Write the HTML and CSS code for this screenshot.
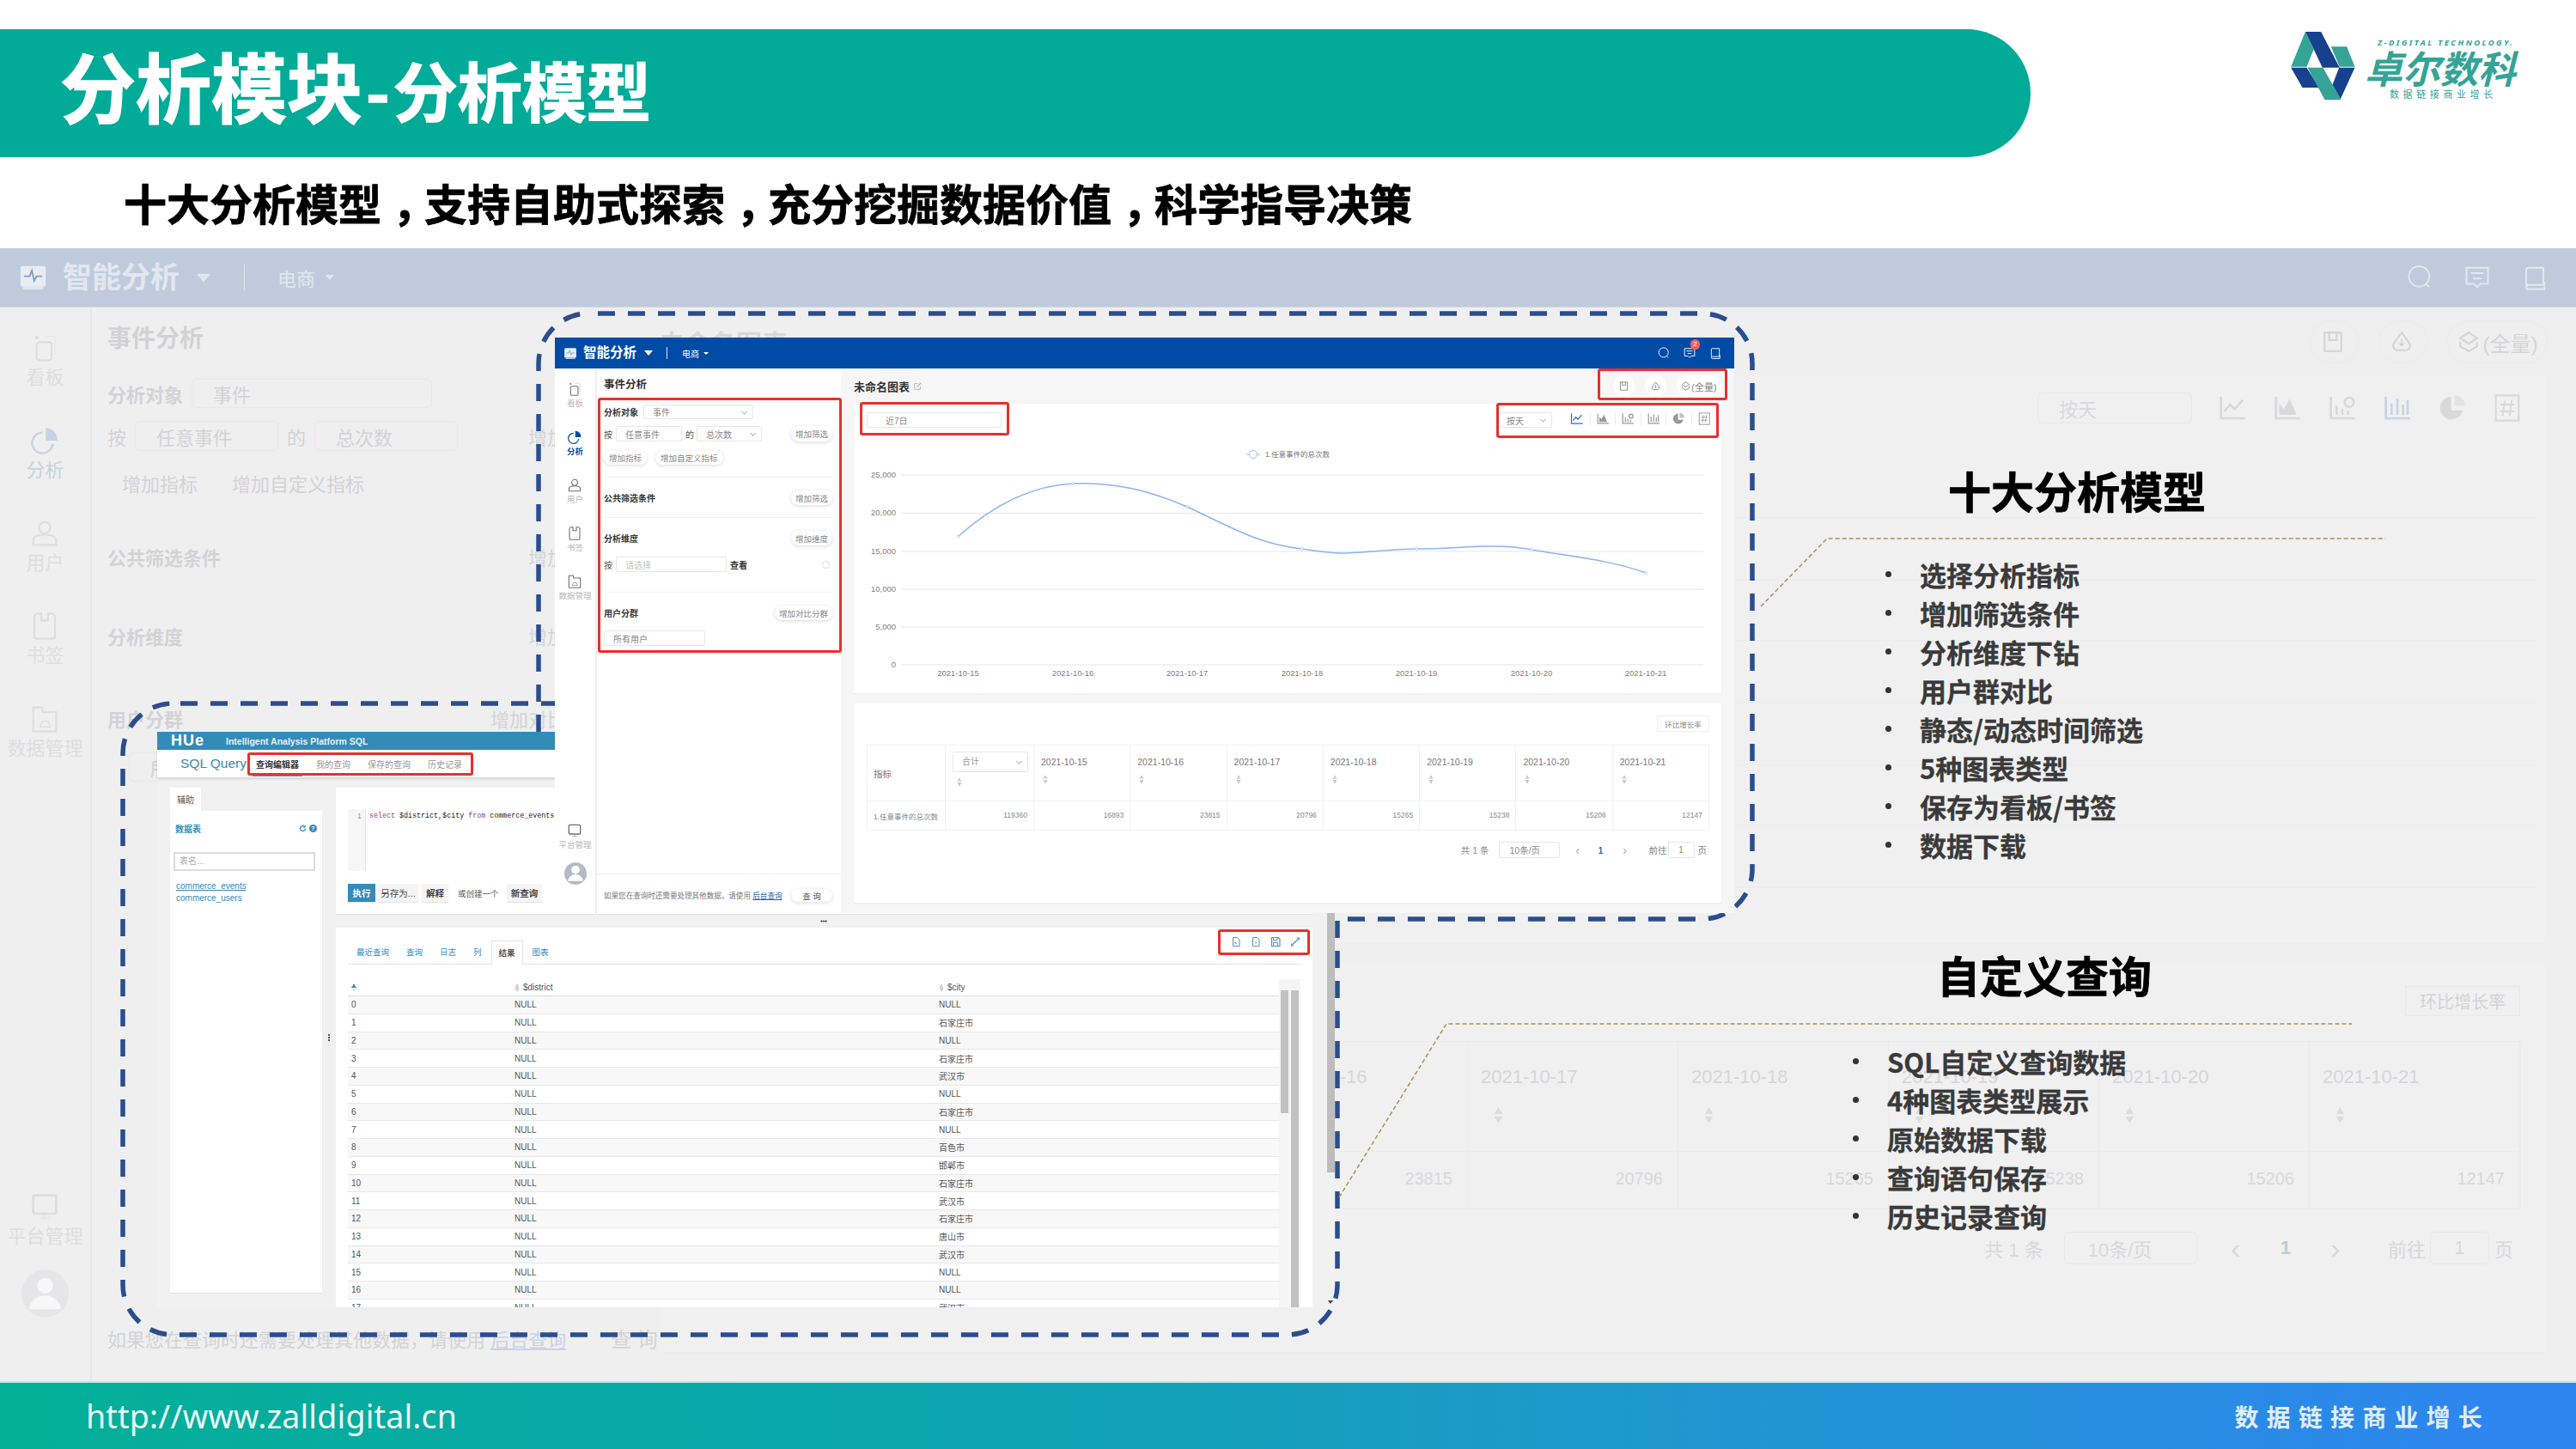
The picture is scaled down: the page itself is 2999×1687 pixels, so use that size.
FILE: index.html
```html
<!DOCTYPE html>
<html lang="zh-CN">
<head>
<meta charset="utf-8">
<title>分析模块-分析模型</title>
<link rel="stylesheet" href="styles.css">
</head>
<body>
<svg class="sprite" width="0" height="0" aria-hidden="true">
  <symbol id="i-search" viewBox="0 0 24 24"><circle cx="11.5" cy="11" r="9.5" fill="none" stroke="currentColor" stroke-width="1.6"/><path d="M18 18l3 3" stroke="currentColor" stroke-width="1.6"/></symbol>
  <symbol id="i-msg" viewBox="0 0 24 24"><path d="M2 3h20v15h-7l-3 3-3-3H2z" fill="none" stroke="currentColor" stroke-width="1.6"/><path d="M6 8h12M8 13h8" stroke="currentColor" stroke-width="1.6"/></symbol>
  <symbol id="i-book" viewBox="0 0 24 24"><path d="M4 19V5a2 2 0 0 1 2-2h14M20 3v16H6a2 2 0 0 0-2 2 2 2 0 0 0 2 2h15V16" fill="none" stroke="currentColor" stroke-width="1.6"/></symbol>
  <symbol id="i-logo" viewBox="0 0 24 24"><rect x="1" y="2" width="22" height="18" rx="2" fill="currentColor"/><rect x="3" y="20" width="18" height="2.5" rx="1" fill="currentColor" opacity=".75"/><path class="pulse" d="M4 11h5l2-5 2 9 2-4h5" fill="none" stroke-width="1.4"/></symbol>
  <symbol id="i-board" viewBox="0 0 24 24"><path d="M12 2h7a2 2 0 0 1 2 2v14" fill="none" stroke="currentColor" stroke-width="1" opacity=".4"/><rect x="5" y="7" width="13" height="16" rx="2.5" fill="none" stroke="currentColor" stroke-width="1.6"/><circle cx="5" cy="3" r="1.6" fill="currentColor"/></symbol>
  <symbol id="i-pie" viewBox="0 0 24 24"><path d="M10 5a9 9 0 1 0 9 10" fill="none" stroke="currentColor" stroke-width="1.8"/><path d="M13 1a10 10 0 0 1 10 11H13z" fill="currentColor"/></symbol>
  <symbol id="i-user" viewBox="0 0 24 24"><circle cx="12" cy="7" r="5" fill="none" stroke="currentColor" stroke-width="1.6"/><path d="M2 22v-4c0-3 4-5 10-5s10 2 10 5v4z" fill="none" stroke="currentColor" stroke-width="1.6"/></symbol>
  <symbol id="i-mark" viewBox="0 0 24 24"><path d="M6 1h3v6h6V1h3a3 3 0 0 1 3 3v17a2 2 0 0 1-2 2H5a2 2 0 0 1-2-2V4a3 3 0 0 1 3-3z" fill="none" stroke="currentColor" stroke-width="1.6"/></symbol>
  <symbol id="i-folder" viewBox="0 0 24 24"><path d="M2 2h8v4h12v17H2z" fill="none" stroke="currentColor" stroke-width="1.6"/><path d="M8 19l2-5h5l2 5z" fill="none" stroke="currentColor" stroke-width="1"/></symbol>
  <symbol id="i-monitor" viewBox="0 0 24 24"><rect x="2" y="2" width="20" height="16" rx="1.5" fill="none" stroke="currentColor" stroke-width="2"/><path d="M8 22h8M12 18v4" stroke="currentColor" stroke-width="1.5" opacity=".5"/></symbol>
  <symbol id="i-line" viewBox="0 0 24 24"><path d="M2 2v19h21" fill="none" stroke="currentColor" stroke-width="2"/><path d="M5 15l5-6 4 4 7-8" fill="none" stroke="currentColor" stroke-width="2"/></symbol>
  <symbol id="i-area" viewBox="0 0 24 24"><path d="M2 2v19h21" fill="none" stroke="currentColor" stroke-width="2"/><path d="M5 18V8l4 5 5-9 6 14z" fill="currentColor"/></symbol>
  <symbol id="i-barpin" viewBox="0 0 24 24"><path d="M2 2v19h21M7 18v-8M12 18v-5" fill="none" stroke="currentColor" stroke-width="2"/><circle cx="18" cy="7" r="4" fill="none" stroke="currentColor" stroke-width="2"/><path d="M17 18v-4" stroke="currentColor" stroke-width="2"/></symbol>
  <symbol id="i-bars" viewBox="0 0 24 24"><path d="M2 2v19h21M7 18V8M12 18V4M17 18v-9M21 18V5" fill="none" stroke="currentColor" stroke-width="2"/></symbol>
  <symbol id="i-donut" viewBox="0 0 24 24"><path d="M11 2a10 10 0 1 0 10 12H11z" fill="currentColor"/><path d="M14 1a9 9 0 0 1 9 9h-9z" fill="currentColor" opacity=".6"/></symbol>
  <symbol id="i-hash" viewBox="0 0 24 24"><rect x="2" y="1" width="20" height="22" fill="none" stroke="currentColor" stroke-width="1.6"/><path d="M10 5L8 19M16 5l-2 14M6 9h12M6 15h12" stroke="currentColor" stroke-width="1.4"/></symbol>
  <symbol id="i-save" viewBox="0 0 24 24"><rect x="3" y="2" width="18" height="20" fill="none" stroke="currentColor" stroke-width="2"/><path d="M8 2v8h8V2" fill="none" stroke="currentColor" stroke-width="2"/></symbol>
  <symbol id="i-cloud" viewBox="0 0 24 24"><path d="M12 2l8 11a5 5 0 0 1-3 8H7a5 5 0 0 1-3-8z" fill="none" stroke="currentColor" stroke-width="2"/><path d="M12 9v7M9.500 13.500l2.500 2.500 2.500-2.500" fill="none" stroke="currentColor" stroke-width="1.6"/></symbol>
  <symbol id="i-layers" viewBox="0 0 24 24"><path d="M12 2l9 6-9 6-9-6z" fill="none" stroke="currentColor" stroke-width="2"/><path d="M3 12v5l9 5 9-5v-5" fill="none" stroke="currentColor" stroke-width="2"/></symbol>
  <symbol id="i-doc" viewBox="0 0 24 24"><path d="M5 2h10l5 5v15H5z" fill="none" stroke="currentColor" stroke-width="2"/><path d="M9 12l5 5M14 12l-5 5" stroke="currentColor" stroke-width="1.600"/></symbol>
  <symbol id="i-doc2" viewBox="0 0 24 24"><path d="M5 2h10l5 5v15H5z" fill="none" stroke="currentColor" stroke-width="2"/><path d="M12 11v6" stroke="currentColor" stroke-width="1.600"/></symbol>
  <symbol id="i-disk" viewBox="0 0 24 24"><path d="M3 2h15l4 4v16H3z" fill="none" stroke="currentColor" stroke-width="2.400"/><path d="M7 2v6h9V2M7 22v-8h10v8" fill="none" stroke="currentColor" stroke-width="2"/></symbol>
  <symbol id="i-expand" viewBox="0 0 24 24"><path d="M6 18L18 6" stroke="currentColor" stroke-width="2.500"/><path d="M15 2h7v7zM2 15v7h7z" fill="currentColor"/></symbol>
  <symbol id="i-refresh" viewBox="0 0 24 24"><path d="M20 12a8 8 0 1 1-3-6.200" fill="none" stroke="currentColor" stroke-width="3.500"/><path d="M21 1v8h-8z" fill="currentColor"/></symbol>
</svg>

<div class="slide">
  <header class="titlebar">
    <h1 class="title">分析模块<span class="title-small"><span class="title-dash">-</span>分析模型</span></h1>
  </header>
  <p class="subtitle">十大分析模型<span class="comma">，</span>支持自助式探索<span class="comma">，</span>充分挖掘数据价值<span class="comma">，</span>科学指导决策</p>

  <section class="ghost">
    <div class="g-head">
      <svg class="g-logo"><use href="#i-logo"/></svg>
      <span class="g-brand">智能分析</span><i class="caret g-caret"></i>
      <span class="g-sep"></span>
      <span class="g-shop">电商</span><i class="caret g-caret g-caret-s"></i>
      <span class="g-head-icons">
        <svg class="g-hicon"><use href="#i-search"/></svg>
        <svg class="g-hicon"><use href="#i-msg"/></svg>
        <svg class="g-hicon"><use href="#i-book"/></svg>
      </span>
    </div>
    <div class="g-body">
      <nav class="g-side">
        <div class="g-nav"><svg><use href="#i-board"/></svg><span>看板</span></div>
        <div class="g-nav g-nav-on"><svg><use href="#i-pie"/></svg><span>分析</span></div>
        <div class="g-nav"><svg><use href="#i-user"/></svg><span>用户</span></div>
        <div class="g-nav"><svg><use href="#i-mark"/></svg><span>书签</span></div>
        <div class="g-nav"><svg><use href="#i-folder"/></svg><span>数据管理</span></div>
        <div class="g-nav g-nav-end"><svg><use href="#i-monitor"/></svg><span>平台管理</span></div>
        <div class="g-avatar"><svg viewBox="0 0 24 24"><circle cx="12" cy="8" r="4" fill="#f7f7f8"/><path d="M4 20c0-4 4-7 8-7s8 3 8 7z" fill="#f7f7f8"/></svg></div>
      </nav>
      <div class="g-panel">
        <h2 class="g-h2">事件分析</h2>
        <div class="g-row g-r1"><b class="g-l">分析对象</b><span class="g-sel g-sel-a">事件</span></div>
        <div class="g-row g-r2"><span class="g-l">按</span><span class="g-sel g-sel-b">任意事件</span><span class="g-l">的</span><span class="g-sel g-sel-b">总次数</span><span class="g-btn g-push">增加筛选</span></div>
        <div class="g-row g-r3"><span class="g-btn">增加指标</span><span class="g-btn">增加自定义指标</span></div>
        <div class="g-row g-r4"><b class="g-l">公共筛选条件</b><span class="g-btn g-push">增加筛选</span></div>
        <div class="g-row g-r5"><b class="g-l">分析维度</b><span class="g-btn g-push">增加维度</span></div>
        <div class="g-row g-r6"><b class="g-l">用户分群</b><span class="g-btn g-push">增加对比分群</span></div>
        <div class="g-row g-r7"><span class="g-sel g-sel-a">所有用户</span></div>
        <div class="g-foot"><span class="g-tip">如果您在查询时还需要处理其他数据，请使用 <u class="g-link">后台查询</u></span><span class="g-btn g-query">查 询</span></div>
      </div>
      <div class="g-main">
        <div class="g-mainhead">
          <span class="g-charttitle">未命名图表</span>
          <span class="g-tools">
            <span class="g-tool"><svg><use href="#i-save"/></svg></span>
            <span class="g-tool"><svg><use href="#i-cloud"/></svg></span>
            <span class="g-tool g-tool-w"><svg><use href="#i-layers"/></svg>(全量)</span>
          </span>
        </div>
        <div class="g-card g-chart">
          <div class="g-toolbar">
            <span class="g-sel g-sel-c">按天</span>
            <svg><use href="#i-line"/></svg><svg><use href="#i-area"/></svg><svg><use href="#i-barpin"/></svg><svg class="g-on"><use href="#i-bars"/></svg><svg><use href="#i-donut"/></svg><svg><use href="#i-hash"/></svg>
          </div>
          <div class="g-lines"><i></i><i></i><i></i><i></i><i></i><i></i><i></i></div>
        </div>
        <div class="g-card g-tablecard">
          <div class="g-growth"><span>环比增长率</span></div>
          <div class="g-table">
            <div class="g-th"></div><div class="g-th"></div>
            <div class="g-th">2021-10-15<i class="sort"></i></div><div class="g-th">2021-10-16<i class="sort"></i></div><div class="g-th">2021-10-17<i class="sort"></i></div><div class="g-th">2021-10-18<i class="sort"></i></div><div class="g-th">2021-10-19<i class="sort"></i></div><div class="g-th">2021-10-20<i class="sort"></i></div><div class="g-th">2021-10-21<i class="sort"></i></div>
            <div class="g-td"></div><div class="g-td"></div><div class="g-td">16893</div><div class="g-td">23815</div><div class="g-td">20796</div><div class="g-td">15265</div><div class="g-td">15238</div><div class="g-td">15206</div><div class="g-td">12147</div>
          </div>
          <div class="g-pager">
            <span class="g-pg-total">共 1 条</span><span class="g-sel g-sel-d">10条/页</span><span class="g-chev">&lsaquo;</span><b class="g-cur">1</b><span class="g-chev">&rsaquo;</span><span class="g-pg-go">前往</span><span class="g-sel g-sel-e">1</span><span class="g-pg-unit">页</span>
          </div>
        </div>
      </div>
    </div>
  </section>

  <footer class="footer">
    <span class="url">http://www.zalldigital.cn</span>
    <span class="motto">数据链接商业增长</span>
  </footer>

  <svg class="canvas" viewBox="0 0 2999 1687"><rect class="dash dash-a" x="627" y="365" width="1413" height="705" rx="58"/></svg>

  <section class="hue">
    <div class="hue-top"><span class="hue-logo">HUe</span><span class="hue-name">Intelligent Analysis Platform SQL</span></div>
    <div class="hue-nav">
      <span class="hue-sql">SQL Query</span>
      <span class="hue-tab hue-tab-on">查询编辑器</span><span class="hue-tab">我的查询</span><span class="hue-tab">保存的查询</span><span class="hue-tab">历史记录</span>
    </div>
    <div class="hue-body">
      <aside class="hue-left">
        <span class="hue-assist">辅助</span>
        <div class="hue-leftbox">
          <div class="hue-lhead"><span>数据表</span><span class="hue-licons"><svg><use href="#i-refresh"/></svg><i class="hue-q">?</i></span></div>
          <div class="hue-search">表名...</div>
          <u class="hue-item">commerce_events</u>
          <span class="hue-item">commerce_users</span>
        </div>
      </aside>
      <i class="hue-grip"></i>
      <div class="hue-right">
        <div class="hue-editor">
          <div class="hue-code"><span class="hue-gutter">1</span><code class="hue-sqltext"><span class="kw">select</span> $district,$city <span class="kw">from</span> commerce_events</code></div>
          <div class="hue-actions"><span class="hue-b hue-b-run">执行</span><span class="hue-b hue-b-w1">另存为...</span><span class="hue-b hue-b-w2">解释</span><span class="hue-or">或创建一个</span><span class="hue-b hue-b-w3">新查询</span></div>
        </div>
        <i class="hue-splitdots"></i>
        <div class="hue-results">
          <div class="hue-rtabs"><span>最近查询</span><span>查询</span><span>日志</span><span>列</span><span class="hue-rtab-on">结果</span><span>图表</span>
            <span class="hue-rtools"><svg><use href="#i-doc"/></svg><svg><use href="#i-doc2"/></svg><svg><use href="#i-disk"/></svg><svg><use href="#i-expand"/></svg></span>
          </div>
          <div class="hue-tablewrap">
            <div class="hue-table">
              <div class="hue-tr hue-thead"><span><i class="sort sort-on"></i></span><span><i class="sort"></i>$district</span><span><i class="sort"></i>$city</span></div>
              <div class="hue-tr"><span>0</span><span>NULL</span><span>NULL</span></div>
              <div class="hue-tr"><span>1</span><span>NULL</span><span>石家庄市</span></div>
              <div class="hue-tr"><span>2</span><span>NULL</span><span>NULL</span></div>
              <div class="hue-tr"><span>3</span><span>NULL</span><span>石家庄市</span></div>
              <div class="hue-tr"><span>4</span><span>NULL</span><span>武汉市</span></div>
              <div class="hue-tr"><span>5</span><span>NULL</span><span>NULL</span></div>
              <div class="hue-tr"><span>6</span><span>NULL</span><span>石家庄市</span></div>
              <div class="hue-tr"><span>7</span><span>NULL</span><span>NULL</span></div>
              <div class="hue-tr"><span>8</span><span>NULL</span><span>百色市</span></div>
              <div class="hue-tr"><span>9</span><span>NULL</span><span>邯郸市</span></div>
              <div class="hue-tr"><span>10</span><span>NULL</span><span>石家庄市</span></div>
              <div class="hue-tr"><span>11</span><span>NULL</span><span>武汉市</span></div>
              <div class="hue-tr"><span>12</span><span>NULL</span><span>石家庄市</span></div>
              <div class="hue-tr"><span>13</span><span>NULL</span><span>唐山市</span></div>
              <div class="hue-tr"><span>14</span><span>NULL</span><span>武汉市</span></div>
              <div class="hue-tr"><span>15</span><span>NULL</span><span>NULL</span></div>
              <div class="hue-tr"><span>16</span><span>NULL</span><span>NULL</span></div>
              <div class="hue-tr"><span>17</span><span>NULL</span><span>武汉市</span></div>
            </div>
            <div class="hue-scrolls"><div class="hue-track"><i class="hue-thumb hue-thumb-a"></i></div><div class="hue-track"><i class="hue-thumb hue-thumb-b"></i></div></div>
          </div>
        </div>
      </div>
      <div class="hue-vbar"><i class="hue-vthumb"></i><i class="hue-varrow"></i></div>
    </div>
  </section>

  <svg class="canvas" viewBox="0 0 2999 1687"><rect class="dash dash-b" x="143" y="819" width="1414" height="735" rx="58"/></svg>

  <section class="app">
    <div class="app-head">
      <svg class="app-logo"><use href="#i-logo"/></svg>
      <span class="app-brand">智能分析</span><i class="caret"></i>
      <span class="app-sep"></span>
      <span class="app-shop">电商</span><i class="caret caret-s"></i>
      <span class="app-hicons">
        <svg><use href="#i-search"/></svg>
        <span class="app-msg"><svg><use href="#i-msg"/></svg><b class="badge">2</b></span>
        <svg><use href="#i-book"/></svg>
      </span>
    </div>
    <div class="app-body">
      <nav class="side">
        <div class="nav"><svg><use href="#i-board"/></svg><span>看板</span></div>
        <div class="nav nav-on"><svg><use href="#i-pie"/></svg><span>分析</span></div>
        <div class="nav"><svg><use href="#i-user"/></svg><span>用户</span></div>
        <div class="nav"><svg><use href="#i-mark"/></svg><span>书签</span></div>
        <div class="nav"><svg><use href="#i-folder"/></svg><span>数据管理</span></div>
        <div class="nav nav-end"><svg><use href="#i-monitor"/></svg><span>平台管理</span></div>
        <div class="avatar"><svg viewBox="0 0 24 24"><circle cx="12" cy="8" r="4.500" fill="#fff"/><path d="M4 20c0-4 4-7 8-7s8 3 8 7z" fill="#fff"/></svg></div>
      </nav>
      <div class="panel">
        <h2 class="panel-title">事件分析</h2>
        <div class="row row-a"><b class="lbl lbl-w">分析对象</b><span class="sel sel-a">事件<i class="chev"></i></span></div>
        <div class="row row-b"><span class="lbl">按</span><span class="sel sel-b">任意事件</span><span class="lbl lbl-of">的</span><span class="sel sel-c">总次数<i class="chev"></i></span><span class="pill push">增加筛选</span></div>
        <div class="row row-c"><span class="pill">增加指标</span><span class="pill pill-g">增加自定义指标</span></div>
        <hr class="rule rule-a">
        <div class="row row-d"><b class="lbl">公共筛选条件</b><span class="pill push">增加筛选</span></div>
        <hr class="rule rule-a">
        <div class="row row-d"><b class="lbl">分析维度</b><span class="pill push">增加维度</span></div>
        <div class="row row-e"><span class="lbl">按</span><span class="sel sel-d ph">请选择</span><b class="lbl lbl-see">查看</b><i class="clear push"></i></div>
        <hr class="rule rule-b">
        <div class="row row-d"><b class="lbl">用户分群</b><span class="pill push">增加对比分群</span></div>
        <div class="row row-f"><span class="sel sel-e">所有用户</span></div>
        <div class="panel-foot"><span class="tip">如果您在查询时还需要处理其他数据，请使用 <u class="link">后台查询</u></span><span class="pill push">查 询</span></div>
      </div>
      <div class="main">
        <div class="main-head">
          <b class="chart-name">未命名图表</b><svg class="edit" viewBox="0 0 24 24"><path d="M20 13v9H2V4h10" fill="none" stroke="currentColor" stroke-width="2"/><path d="M9 15l3-1L23 3l-2-2L10 12z" fill="currentColor"/></svg>
          <span class="main-tools">
            <span class="tool"><svg><use href="#i-save"/></svg></span>
            <span class="tool"><svg><use href="#i-cloud"/></svg></span>
            <span class="tool tool-w"><svg><use href="#i-layers"/></svg>(全量)</span>
          </span>
        </div>
        <div class="card card-chart">
          <div class="toolbar">
            <span class="sel sel-f">近7日</span>
            <span class="sel sel-g">按天<i class="chev"></i></span>
            <span class="types">
              <svg class="type-on"><use href="#i-line"/></svg><svg><use href="#i-area"/></svg><svg><use href="#i-barpin"/></svg><svg><use href="#i-bars"/></svg><svg><use href="#i-donut"/></svg><svg><use href="#i-hash"/></svg>
            </span>
          </div>
          <svg class="chart" viewBox="994 498 1010 309">
            <g class="grid"><path d="M1049 553h934M1049 597.500h934M1049 642h934M1049 686h934M1049 730h934M1049 774h934"/></g>
            <g class="ylab"><text x="1043" y="556">25,000</text><text x="1043" y="600">20,000</text><text x="1043" y="645">15,000</text><text x="1043" y="689">10,000</text><text x="1043" y="733">5,000</text><text x="1043" y="777">0</text></g>
            <g class="xlab"><text x="1115.500" y="787">2021-10-15</text><text x="1249" y="787">2021-10-16</text><text x="1382" y="787">2021-10-17</text><text x="1516" y="787">2021-10-18</text><text x="1649" y="787">2021-10-19</text><text x="1783" y="787">2021-10-20</text><text x="1916" y="787">2021-10-21</text></g>
            <path class="curve" d="M1115.500 624.500C1160 585 1205 565 1249 563C1300 561 1340 572 1382 590C1430 612 1465 634 1516 639C1535 642 1550 644 1562 644C1590 644 1620 639 1649 639C1680 639 1710 636 1736 636C1755 636 1770 637 1783 640C1830 648 1875 652 1916 667"/>
            <g class="dots"><circle cx="1115.500" cy="624.500" r="1.500"/><circle cx="1249" cy="563" r="1.500"/><circle cx="1382" cy="590" r="1.500"/><circle cx="1516" cy="639" r="1.500"/><circle cx="1649" cy="639" r="1.500"/><circle cx="1783" cy="640" r="1.500"/><circle cx="1916" cy="667" r="1.500"/></g>
            <path class="legend-line" d="M1451 529h16"/><circle class="legend-dot" cx="1459" cy="529" r="4.500"/>
            <text class="legend" x="1473" y="532">1.任意事件的总次数</text>
          </svg>
        </div>
        <div class="card card-table">
          <div class="growth-row"><span class="growth">环比增长率</span></div>
          <div class="dt">
            <div class="dt-h dt-h-m">指标</div>
            <div class="dt-h dt-h-t"><span class="sel sel-h">合计<i class="chev"></i></span><i class="sort"></i></div>
            <div class="dt-h">2021-10-15<i class="sort"></i></div><div class="dt-h">2021-10-16<i class="sort"></i></div><div class="dt-h">2021-10-17<i class="sort"></i></div><div class="dt-h">2021-10-18<i class="sort"></i></div><div class="dt-h">2021-10-19<i class="sort"></i></div><div class="dt-h">2021-10-20<i class="sort"></i></div><div class="dt-h">2021-10-21<i class="sort"></i></div>
            <div class="dt-d dt-d-l">1.任意事件的总次数</div><div class="dt-d">119360</div><div class="dt-d">16893</div><div class="dt-d">23815</div><div class="dt-d">20796</div><div class="dt-d">15265</div><div class="dt-d">15238</div><div class="dt-d">15206</div><div class="dt-d">12147</div>
          </div>
          <div class="pager">
            <span class="pg-total">共 1 条</span><span class="sel sel-i">10条/页</span><span class="pg-arrow pg-prev">&lsaquo;</span><b class="pg-cur">1</b><span class="pg-arrow pg-next">&rsaquo;</span><span class="pg-go">前往</span><span class="sel sel-j">1</span><span>页</span>
          </div>
        </div>
      </div>
    </div>
  </section>

  <svg class="canvas" viewBox="0 0 2999 1687">
    <path class="leader" d="M2050 706L2127 627H2777"/>
    <path class="leader" d="M1559 1394L1684 1192H2738"/>
  </svg>

  <i class="red r-panel"></i><i class="red r-date"></i><i class="red r-tools"></i><i class="red r-types"></i><i class="red r-hue"></i><i class="red r-rtools"></i>

  <aside class="note note-a">
    <h3 class="note-title">十大分析模型</h3>
    <ul class="note-list">
      <li>选择分析指标</li><li>增加筛选条件</li><li>分析维度下钻</li><li>用户群对比</li><li>静态/动态时间筛选</li><li>5种图表类型</li><li>保存为看板/书签</li><li>数据下载</li>
    </ul>
  </aside>
  <aside class="note note-b">
    <h3 class="note-title">自定义查询</h3>
    <ul class="note-list">
      <li>SQL自定义查询数据</li><li>4种图表类型展示</li><li>原始数据下载</li><li>查询语句保存</li><li>历史记录查询</li>
    </ul>
  </aside>

  <div class="brand">
    <svg class="brand-mark" viewBox="500 110 224 240">
      <path fill="#17408f" d="M550 110h55l65 125h-60z"/>
      <path fill="#35a396" d="M550 110L500 232h55l25-62zM640 162h55l28 70h-53z"/>
      <path fill="#17408f" d="M500 235h55l43 70h-58zM668 235h55l-50 110-28-50z"/>
      <path fill="#35a396" d="M558 235h54l63 113h-57z"/>
    </svg>
    <div class="brand-text">
      <span class="brand-en">Z-DIGITAL TECHNOLOGY.</span>
      <span class="brand-cn">卓尔数科</span>
      <span class="brand-sub">数据链接商业增长</span>
    </div>
  </div>
</div>
</body>
</html>
```

FILE: styles.css
```css
* { box-sizing: border-box; }
html, body { margin: 0; padding: 0; background: #fff; }
body { font-family: "Liberation Sans", "Noto Sans CJK SC", sans-serif; }
h1, h2, h3, p, ul { margin: 0; padding: 0; }
i { font-style: normal; }
.sprite { position: absolute; }

.slide { position: relative; width: 2999px; height: 1687px; overflow: hidden; background: #fff; display: flex; flex-direction: column; padding-top: 34px; }

/* heading */
.titlebar { flex: none; width: 2364px; height: 149px; background: #02ab98; border-radius: 0 75px 75px 0; padding-left: 70px; display: flex; align-items: center; }
.title { font: 700 88px/1 "Noto Sans CJK SC", sans-serif; color: #fff; margin-top: -22px; -webkit-text-stroke: 1.500px #fff; white-space: nowrap; }
.title-small { font-size: 75px; }
.title-dash { display: inline-block; margin: 0 4px 0 4px; }
.subtitle { flex: none; height: 106px; padding-left: 144px; font: 700 50px/104px "Noto Sans CJK SC", sans-serif; color: #000; white-space: nowrap; -webkit-text-stroke: .8px #000; }
.comma { display: inline-block; transform: translateX(.26em); }

/* ghost background app */
.ghost { flex: none; height: 1319px; background: #efeff0; display: flex; flex-direction: column; color: #d3d3d5; font-family: "Liberation Sans", "Noto Sans CJK SC", sans-serif; }
.g-head { flex: none; height: 69px; background: #bfcbdd; display: flex; align-items: center; padding-left: 21px; color: #e2e7ef; border-bottom: 1px solid #cfd6e2; }
.g-logo { width: 35px; height: 32px; color: #e9edf3; }
.g-head .pulse { stroke: #a9b8cf; }
.pulse { stroke: #7f9cc8; }
.g-brand { font-size: 34px; font-weight: 700; margin-left: 17px; line-height: 1; }
.caret { display: inline-block; width: 0; height: 0; border: 5px solid transparent; border-top: 6px solid #fff; border-bottom: 0; margin-left: 9px; }
.g-caret { border-width: 9px 8px 0; border-top-color: #e2e7ef; margin-left: 20px; }
.g-caret-s { border-width: 6px 5px 0; margin-left: 12px; }
.g-sep { width: 1px; height: 30px; background: #e2e7ef; margin-left: 39px; }
.g-shop { font-size: 22px; margin-left: 38px; }
.g-head-icons { margin-left: auto; display: flex; gap: 35px; padding-right: 32px; }
.g-hicon { width: 32px; height: 30px; }
.g-body { flex: 1; display: grid; grid-template-columns: 107px 640px 1fr; min-height: 0; }
.g-side { border-right: 2px solid #e9e9ea; display: flex; flex-direction: column; align-items: center; padding-top: 31px; }
.g-nav { height: 108px; display: flex; flex-direction: column; align-items: center; color: #dededf; }
.g-nav svg { width: 34px; height: 32px; }
.g-nav span { font-size: 22px; line-height: 1; margin-top: 8px; }
.g-nav-on { color: #c8d2e1; }
.g-nav-end { margin-top: auto; height: 77px; }
.g-avatar { width: 55px; height: 56px; border-radius: 50%; background: #e6e6e8; margin-bottom: 74px; margin-top: 12px; flex: none; }
.g-avatar svg { width: 55px; height: 56px; display: block; }
.g-panel { padding-left: 18px; display: flex; flex-direction: column; }
.g-h2 { font-size: 28px; font-weight: 700; line-height: 74px; height: 74px; color: #d2d2d4; }
.g-row { display: flex; align-items: center; gap: 10px; font-size: 22px; }
.g-l { font-weight: 400; flex: none; }
b.g-l { font-weight: 700; }
.g-r1 { margin-top: 9px; height: 34px; }
.g-r2 { margin-top: 15px; height: 35px; }
.g-r3 { margin-top: 20px; height: 33px; gap: 40px; padding-left: 17px; }
.g-r4 { margin-top: 55px; height: 30px; }
.g-r5 { margin-top: 62px; height: 30px; }
.g-r6 { margin-top: 66px; height: 30px; }
.g-r7 { margin-top: 25px; height: 34px; padding-left: 25px; }
.g-sel { border: 1px solid #e8e8ea; border-radius: 6px; display: flex; align-items: center; height: 100%; padding-left: 24px; }
.g-sel-a { width: 280px; }
.g-sel-b { width: 167px; }
.g-sel-c { width: 180px; height: 36px; }
.g-sel-d { width: 155px; height: 38px; margin-left: 24px; padding-left: 27px; }
.g-sel-e { width: 69px; height: 38px; margin-left: 5px; padding: 0; justify-content: center; }
.g-btn { flex: none; }
.g-push { margin-left: auto; margin-right: 44px; }
.g-foot { margin-top: auto; margin-bottom: 33px; display: flex; align-items: center; font-size: 22px; }
.g-tip { flex: none; }
.g-link { color: #c8d3e6; }
.g-query { margin-left: 52px; font-size: 24px; }
.g-main { padding: 0 34px 33px 20px; display: flex; flex-direction: column; min-width: 0; }
.g-mainhead { height: 80px; flex: none; display: flex; align-items: center; }
.g-charttitle { font-size: 30px; font-weight: 700; color: #d8d8da; }
.g-tools { margin-left: auto; display: flex; gap: 25px; font-size: 24px; }
.g-tool { width: 55px; height: 47px; border-radius: 26px; background: #efeff0; box-shadow: 0 0 4px rgba(0,0,0,.03); display: flex; align-items: center; justify-content: center; color: #d5d5d7; }
.g-tool svg { width: 26px; height: 28px; margin-right: 4px; }
.g-tool-w { width: 115px; }
.g-card { background: #f0f0f1; box-shadow: 0 1px 2px rgba(0,0,0,.015); }
.g-chart { flex: none; height: 660px; padding: 19px 29px 0 0; }
.g-toolbar { display: flex; justify-content: flex-end; align-items: center; gap: 30px; height: 36px; color: #d9d9db; }
.g-toolbar svg { width: 34px; height: 32px; }
.g-toolbar .g-on { color: #c9d3e3; }
.g-toolbar .g-sel-c { font-size: 22px; }
.g-lines { margin: 109px -17px 0 0; display: grid; grid-auto-rows: 71.67px; }
.g-lines i { border-top: 2px solid #ecedee; }
.g-tablecard { flex: none; height: 454px; margin-top: 22px; padding: 28px 31px 0 0; display: flex; flex-direction: column; }
.g-growth { display: flex; justify-content: flex-end; font-size: 20px; }
.g-growth span { width: 134px; height: 35px; border: 1px solid #e8e8ea; display: flex; align-items: center; justify-content: center; white-space: nowrap; }
.g-table { margin-top: 29px; margin-left: auto; display: grid; grid-template-columns: 226px 226px repeat(7, 245px); grid-template-rows: 128px 66px; border: 1px solid #ebebec; border-width: 1px 1px 1px 0; }
.g-th { border-right: 1px solid #ebebec; border-bottom: 1px solid #ebebec; padding: 26px 0 0 15px; font-size: 22px; line-height: 30px; color: #d6d6d8; }
.g-th .sort { display: block; margin: 20px 0 0 15px; color: #dcdce0; transform: scale(1.8); transform-origin: 0 0; }
.g-td { border-right: 1px solid #ebebec; text-align: right; padding: 20px 17px 0 0; font-size: 20px; color: #d8d8da; }
.g-pager { margin-top: 26px; display: flex; align-items: center; justify-content: flex-end; font-size: 22px; color: #d8d8da; margin-right: 8px; }
.g-pg-total { white-space: nowrap; }
.g-chev { font-size: 34px; line-height: 1; width: 14px; text-align: center; margin-left: 38px; }
.g-cur { color: #bcc9dd; margin-left: 45px; }
.g-cur + .g-chev { margin-left: 45px; }
.g-pg-go { margin-left: 54px; }
.g-pg-unit { margin-left: 6px; }

/* footer */
.footer { flex: none; height: 80px; border-top: 2px solid #bfe6e4; background: linear-gradient(90deg, #04b097 0%, #0ba6ad 35%, #1d99cb 62%, #2f84f2 100%); display: flex; align-items: center; justify-content: space-between; padding: 0 104px 0 100px; color: #fff; }
.url { font: 400 37.500px/1 "Noto Sans", sans-serif; letter-spacing: .2px; opacity: .92; }
.motto { font: 700 28px/1 "Noto Sans CJK SC", sans-serif; letter-spacing: 9.200px; opacity: .85; margin-right: -4px; }

/* overlays */
.canvas { position: absolute; left: 0; top: 0; width: 2999px; height: 1687px; pointer-events: none; }
.dash { fill: none; stroke: #2b4d8e; stroke-width: 5.500; stroke-dasharray: 20 15; }
.dash-a { stroke-dashoffset: -11; }
.dash-b { stroke-dashoffset: -9; }
.leader { fill: none; stroke: #a09658; stroke-width: 1.500; stroke-dasharray: 5 3; }
.red { position: absolute; border: 3px solid #e9302b; border-radius: 3px; }
.r-panel { left: 696px; top: 463px; width: 284px; height: 297px; }
.r-date { left: 1001px; top: 468px; width: 174px; height: 39px; }
.r-tools { left: 1860px; top: 429px; width: 151px; height: 37px; }
.r-types { left: 1742px; top: 469px; width: 259px; height: 41px; }
.r-hue { left: 288px; top: 876px; width: 263px; height: 27px; }
.r-rtools { left: 1418px; top: 1082px; width: 107px; height: 30px; }

/* hue screenshot */
.hue { position: absolute; left: 183px; top: 852px; width: 1371px; height: 670px; background: #f1f1f2; color: #555; display: flex; flex-direction: column; font-size: 10px; }
.hue-top { flex: none; height: 21px; background: #338bb8; color: #fff; display: flex; align-items: center; padding-left: 16px; }
.hue-logo { font-size: 18px; font-weight: 700; letter-spacing: 1px; width: 64px; }
.hue-name { font-size: 10.500px; font-weight: 700; color: #e6f1f7; }
.hue-nav { flex: none; height: 32px; background: #fff; box-shadow: 0 2px 3px rgba(0,0,0,.12); display: flex; align-items: center; padding-left: 27px; font-size: 10px; color: #999; position: relative; }
.hue-sql { font-size: 15.500px; color: #338bb8; width: 88px; white-space: nowrap; }
.hue-tab { margin-right: 20px; }
.hue-tab-on { color: #333; font-weight: 700; position: relative; }
.hue-tab-on::after { content: ""; position: absolute; left: -4px; right: -4px; top: 19px; height: 3px; background: #7089a8; }
.hue-body { flex: 1; display: grid; grid-template-columns: 177px 16px 1137px 26px; padding: 12px 0 0 15px; min-height: 0; position: relative; }
.hue-left { display: flex; flex-direction: column; height: 588px; }
.hue-assist { width: 36px; height: 27px; background: #fff; display: flex; align-items: center; justify-content: center; }
.hue-leftbox { flex: 1; background: #fff; padding: 0 4px; display: flex; flex-direction: column; box-shadow: 0 1px 1px rgba(0,0,0,.05); }
.hue-lhead { display: flex; justify-content: space-between; align-items: center; padding: 10px 2px 0 2px; height: 30px; color: #338bb8; font-weight: 700; font-size: 10px; }
.hue-licons { display: flex; gap: 3px; align-items: center; }
.hue-licons svg { width: 9px; height: 9px; }
.hue-q { width: 9px; height: 9px; border-radius: 50%; background: #338bb8; color: #fff; font-size: 7px; line-height: 9px; text-align: center; font-weight: 700; }
.hue-search { margin-top: 18px; height: 22px; width: 165px; border: 2px solid #ddd; padding-left: 5px; line-height: 18px; color: #aaa; }
.hue-item { color: #338bb8; margin: 0 0 3px 3px; line-height: 11px; }
.hue-search + .hue-item { margin-top: 12px; }
.hue-grip { align-self: start; margin: 287px 0 0 7px; width: 2px; height: 8px; background: repeating-linear-gradient(#555 0 2px, transparent 2px 3px); }
.hue-right { display: flex; flex-direction: column; min-width: 0; height: 605px; }
.hue-editor { flex: none; height: 147px; background: #fff; padding: 25px 14px 0; box-shadow: 0 1px 1px rgba(0,0,0,.05); overflow: hidden; }
.hue-code { height: 72px; display: flex; background: linear-gradient(90deg, #f6f6f6 21px, #fff 21px); }
.hue-gutter { width: 21px; text-align: right; padding: 3px 4px 0 0; color: #999; font-size: 9px; border-right: 1px solid #e5e5e5; flex: none; }
.hue-sqltext { padding: 3px 0 0 4px; font: 8.350px/10px "Liberation Mono", monospace; color: #222; white-space: nowrap; }
.kw { color: #8a3f98; }
.hue-actions { margin-top: 15px; display: flex; align-items: center; gap: 3px; height: 21px; }
.hue-b { height: 21px; background: #f5f5f5; display: flex; align-items: center; justify-content: center; font-weight: 700; color: #444; box-shadow: 0 1px 1px rgba(0,0,0,.1); font-size: 10.500px; }
.hue-b-run { width: 32px; background: #338bb8; color: #fff; }
.hue-b-w1 { width: 47px; font-weight: 400; }
.hue-b-w2 { width: 31px; margin-left: 1px; }
.hue-b-w3 { width: 41px; margin-left: 8px; }
.hue-or { margin-left: 8px; width: 46px; white-space: nowrap; font-size: 9.500px; }
.hue-splitdots { flex: none; align-self: center; margin: 7px 0 0 -1px; height: 9px; width: 8px; background: radial-gradient(circle, #666 0 1px, transparent 1.200px) 0 0 / 2.700px 3px repeat-x; }
.hue-results { flex: none; height: 442px; background: #fff; padding-left: 14px; position: relative; overflow: hidden; }
.hue-rtabs { height: 43px; margin-right: 14px; border-bottom: 1px solid #e4e4e4; display: flex; align-items: flex-end; padding-left: 10px; color: #338bb8; font-size: 9.500px; gap: 20px; }
.hue-rtabs span { line-height: 26px; height: 26px; flex: none; }
.hue-rtabs .hue-rtab-on { width: 37px; height: 28px; line-height: 28px; text-align: center; margin: 0 -9px 0 -9px; background: #fff; border: 1px solid #e4e4e4; border-bottom: 0; color: #555; font-weight: 700; position: relative; top: 1px; }
.hue-rtabs .hue-rtools { margin-left: auto; display: flex; gap: 11px; position: absolute; right: 14px; top: 10px; color: #4d93c0; }
.hue-rtools svg { width: 12px; height: 13px; }
.hue-tablewrap { display: flex; margin-top: 17px; }
.hue-table { width: 1084px; flex: none; }
.hue-tr { display: grid; grid-template-columns: 190px 494px 1fr; height: 20.750px; align-items: center; border-bottom: 1px solid #e8e8e8; padding-left: 4px; font-size: 10px; color: #555; }
.hue-tr:nth-child(even) { background: #f8f8f8; }
.hue-thead { height: 20px; background: #fff; color: #555; border-bottom: 1px solid #e0e0e0; }
.hue-thead span { display: flex; align-items: center; gap: 4px; }
.hue-scrolls { width: 25px; background: #f5f5f5; display: flex; gap: 3px; padding: 13px 2px 0; align-items: flex-start; height: 400px; }
.hue-track { width: 9px; }
.hue-thumb { display: block; width: 9px; background: #c1c1c1; }
.hue-thumb-a { height: 143px; }
.hue-thumb-b { height: 380px; }
.hue-vbar { position: absolute; right: 0; top: 0; width: 26px; padding-top: 158px; }
.hue-vthumb { display: block; width: 9px; height: 302px; background: #bdbdbd; margin-left: 17px; }
.hue-varrow { display: block; width: 0; height: 0; margin: 149px 0 0 18px; border: 3px solid transparent; border-top: 4px solid #444; border-bottom: 0; }

.sort { display: inline-block; width: 6px; height: 10px; background:
  conic-gradient(from 150deg at 50% 0, currentColor 60deg, transparent 0) 0 0 / 6px 4.500px no-repeat,
  conic-gradient(from -30deg at 50% 100%, currentColor 60deg, transparent 0) 0 100% / 6px 4.500px no-repeat; color: #ccc; }
.sort-on { background:
  conic-gradient(from 150deg at 50% 0, #338bb8 60deg, transparent 0) 0 0 / 6px 5px no-repeat,
  conic-gradient(from -30deg at 50% 100%, #ddd 60deg, transparent 0) 0 100% / 6px 4px no-repeat; }

/* foreground app */
.app { position: absolute; left: 646px; top: 393px; width: 1373px; height: 670px; display: flex; flex-direction: column; background: #f6f6f7; }
.app-head { flex: none; height: 36px; background: #004ba6; color: #fff; display: flex; align-items: center; padding-left: 10px; }
.app-logo { width: 16px; height: 15px; color: #e7eef8; }
.app-brand { font-size: 15.500px; font-weight: 700; margin-left: 7px; line-height: 1; }
.app-sep { width: 1px; height: 14px; background: #d5e1f1; margin-left: 16px; }
.app-shop { font-size: 10px; margin-left: 17px; }
.caret-s { border-width: 3px 3px 0; margin-left: 5px; }
.app-hicons { margin-left: auto; display: flex; align-items: center; gap: 16px; padding-right: 15px; }
.app-hicons svg { width: 14px; height: 14px; display: block; }
.app-msg { position: relative; }
.badge { position: absolute; left: 8px; top: -9px; width: 11px; height: 12px; border-radius: 6px; background: #f4605c; font-size: 8px; line-height: 12px; text-align: center; font-weight: 400; }
.app-body { flex: 1; display: grid; grid-template-columns: 49px 284px 1fr; min-height: 0; }
.side { background: #fff; border-right: 2px solid #eceef1; display: flex; flex-direction: column; align-items: center; padding-top: 16px; color: #555; }
.nav { height: 56px; display: flex; flex-direction: column; align-items: center; color: #6b6f76; }
.nav svg { width: 16px; height: 16px; flex: none; }
.nav span { font-size: 9.500px; line-height: 1; margin-top: 4px; color: #b8b8b8; white-space: nowrap; }
.nav-on { color: #004ba6; }
.nav-on span { color: #004ba6; font-weight: 700; }
.nav-end { margin-top: auto; height: 45px; }
.avatar { flex: none; width: 26px; height: 26px; border-radius: 50%; background: #b3bac5; margin-bottom: 33px; }
.avatar svg { width: 26px; height: 26px; display: block; }
.panel { background: #fff; padding: 0 10px 0 8px; display: flex; flex-direction: column; font-size: 10px; color: #777; }
.panel-title { flex: none; height: 38px; font-size: 12.500px; line-height: 38px; color: #333; font-weight: 700; }
.row { display: flex; align-items: center; flex: none; }
.row-a { height: 17px; margin-top: 4px; }
.row-b { height: 18px; margin-top: 8px; }
.row-c { height: 16px; margin-top: 11px; gap: 10px; }
.row-d { height: 17px; margin-top: 15px; }
.row-e { height: 18px; margin-top: 13px; }
.row-f { height: 18px; margin-top: 12px; }
.lbl { flex: none; color: #555; }
b.lbl { color: #333; }
.lbl-w { width: 46px; }
.row-b .lbl:first-child, .row-e .lbl:first-child { width: 14px; }
.lbl-of { width: 17px; padding-left: 4px; }
.lbl-see { margin-left: 4px; }
.rule { flex: none; border: 0; height: 1px; background: #f1f1f1; margin: 0; }
.rule-a { margin-top: 14px; }
.rule-b { margin-top: 23px; }
.sel { display: flex; align-items: center; border: 1px solid #e7e7e9; border-radius: 2px; height: 100%; padding-left: 10px; flex: none; position: relative; background: #fff; color: #888; font-size: 10px; }
.chev { position: absolute; right: 7px; top: 50%; width: 5px; height: 5px; border-right: 1px solid #bbb; border-bottom: 1px solid #bbb; transform: translateY(-65%) rotate(45deg); }
.sel-a { width: 128px; }
.sel-b { width: 77px; }
.sel-c { width: 76px; }
.sel-d { width: 129px; }
.ph { color: #c6c6c6; }
.sel-e { width: 118px; }
.sel-f { width: 157px; height: 18px; padding-left: 21px; }
.sel-g { width: 64px; height: 18px; margin-left: auto; }
.sel-h { width: 88px; height: 24px; color: #999; }
.sel-i { width: 71px; height: 19px; padding-left: 12px; font-size: 10.500px; margin-right: 17px; }
.sel-j { width: 31px; height: 19px; padding: 0; justify-content: center; margin-right: 4px; }
.pill { flex: none; height: 16px; padding: 0 6px; border-radius: 10px; background: #fff; box-shadow: 0 1px 4px rgba(0,0,0,.15); display: flex; align-items: center; justify-content: center; color: #888; font-size: 9.500px; white-space: nowrap; }
.row .pill { height: 100%; }
.row-d .pill, .row-b .pill { min-width: 48px; padding: 0 5px; }
.pill-g { width: auto; }
.push { margin-left: auto; }
.clear { width: 9px; height: 9px; border-radius: 50%; border: 1px solid #ddd; margin-right: 3px; }
.panel-foot { margin-top: auto; flex: none; margin-left: -8px; margin-right: -10px; padding: 15px 10px 0 8px; border-top: 1px solid #eee; height: 46px; display: flex; align-items: flex-start; font-size: 10px; color: #777; }
.tip { padding-top: 4px; white-space: nowrap; font-size: 8.550px; line-height: 12px; }
.link { color: #1f62b4; }
.panel-foot .pill { width: 48px; height: 15px; padding: 0; margin-top: 2px; color: #555; }
.main { padding: 0 15px; display: flex; flex-direction: column; min-width: 0; }
.main-head { flex: none; height: 41px; display: flex; align-items: center; color: #333; }
.chart-name { font-size: 13px; }
.edit { width: 9px; height: 9px; margin-left: 5px; color: #aaa; }
.main-tools { margin-left: auto; display: flex; gap: 12px; font-size: 11px; color: #888; }
.tool { width: 25px; height: 25px; border-radius: 13px; background: #fff; display: flex; align-items: center; justify-content: center; color: #888; }
.tool svg { width: 11px; height: 11px; flex: none; margin-right: 1px; }
.tool-w { width: 52px; white-space: nowrap; }
.card { background: #fff; box-shadow: 0 1px 2px rgba(0,0,0,.06); flex: none; }
.card-chart { height: 337px; }
.toolbar { height: 28px; padding: 10px 0 0 15px; display: flex; align-items: flex-start; }
.types { display: flex; padding-right: 6px; margin-left: 14px; }
.types svg { width: 29.500px; height: 15px; padding: 0 7px; border-left: 1px solid #eaeaea; color: #999; overflow: visible; }
.types svg:first-child { border-left: 0; }
.type-on { color: #2d6fc0 !important; }
.chart { display: block; width: 1010px; height: 309px; }
.grid path { stroke: #e8e8ea; stroke-width: 1.200; fill: none; }
.ylab text { font-size: 9.500px; fill: #808080; text-anchor: end; }
.xlab text { font-size: 9.500px; fill: #808080; text-anchor: middle; }
.curve { fill: none; stroke: #8cb4ee; stroke-width: 1.500; }
.dots circle { fill: #fff; stroke: #9dbdf0; stroke-width: .7; }
.legend-line { stroke: #9dbdf0; stroke-width: 1; }
.legend-dot { fill: #fff; stroke: #9dbdf0; stroke-width: 1; }
.legend { font-size: 8.500px; fill: #777; }
.card-table { height: 232px; margin-top: 12px; padding: 14px 14px 0 15px; display: flex; flex-direction: column; }
.growth-row { display: flex; justify-content: flex-end; height: 19px; }
.growth { border: 1px solid #eee; width: 61px; display: flex; align-items: center; justify-content: center; font-size: 8.500px; color: #888; white-space: nowrap; }
.dt { margin-top: 15px; display: grid; grid-template-columns: 91px 103px repeat(7, 1fr); grid-template-rows: 65px 34px; border: 1px solid #f1f2f4; border-width: 1px 0 0 1px; font-size: 10.500px; color: #888; }
.dt-h { border-right: 1px solid #f1f2f4; border-bottom: 1px solid #f1f2f4; padding: 13px 0 0 8px; display: flex; flex-direction: column; align-items: flex-start; color: #777; font-size: 10.500px; line-height: 12px; }
.dt-h .sort { margin-top: 9px; margin-left: 2px; }
.dt-h-m { justify-content: flex-start; padding: 27px 0 0 7px; }
.dt-h-t { padding-top: 7px; }
.dt-h-t .sort { margin-top: 6px; margin-left: 5px; }
.dt-d { border-right: 1px solid #f1f2f4; border-bottom: 1px solid #f1f2f4; text-align: right; padding: 11px 7px 0 0; font-size: 8.500px; color: #8a8a8a; white-space: nowrap; }
.dt-d-l { text-align: left; padding-left: 7px; }
.pager { margin-top: 13px; display: flex; align-items: center; justify-content: flex-end; height: 19px; padding-right: 3px; font-size: 10.500px; color: #888; }
.pg-total { margin-right: 11px; white-space: nowrap; }
.pg-arrow { width: 8px; text-align: center; font-size: 14px; color: #aaa; }
.pg-prev { margin-right: 20px; }
.pg-next { margin-left: 21px; margin-right: 24px; }
.pg-cur { color: #2d6fa8; width: 6px; text-align: center; }
.pg-go { margin-right: 1px; white-space: nowrap; }

/* notes */
.note { position: absolute; color: #333; font-family: "Noto Sans CJK SC", sans-serif; }
.note-a { left: 2191px; top: 534px; }
.note-b { left: 2153px; top: 1098px; }
.note-title { font-size: 50px; line-height: 72px; font-weight: 700; color: #000; -webkit-text-stroke: .8px #000; white-space: nowrap; }
.note-a .note-title { padding-left: 77px; }
.note-b .note-title { padding-left: 102px; }
.note-list { list-style: none; font-size: 31px; line-height: 45px; font-weight: 700; color: #3a3a3a; -webkit-text-stroke: .3px #3a3a3a; }
.note-a .note-list { margin-top: 40px; }
.note-b .note-list { margin-top: 43px; }
.note-list li { display: flex; align-items: center; white-space: nowrap; }
.note-list li::before { content: ""; width: 7px; height: 7px; border-radius: 50%; background: #333; margin: 0 33px 0 4px; flex: none; }

/* logo */
.brand { position: absolute; left: 2667px; top: 37px; display: flex; }
.brand-mark { width: 75px; height: 80px; flex: none; }
.brand-text { margin-left: 11px; display: flex; flex-direction: column; color: #35a396; width: 180px; }
.brand-en { font: italic 700 9.500px/1 "Noto Sans", sans-serif; letter-spacing: 2.400px; margin-top: 8px; padding-left: 15px; white-space: nowrap; }
.brand-cn { font: italic 700 44px/1 "Noto Sans CJK SC", sans-serif; margin-top: 1px; white-space: nowrap; }
.brand-sub { font: 400 11px/1 "Noto Sans CJK SC", sans-serif; letter-spacing: 4.600px; padding-left: 29px; margin-top: 4px; white-space: nowrap; }
```
